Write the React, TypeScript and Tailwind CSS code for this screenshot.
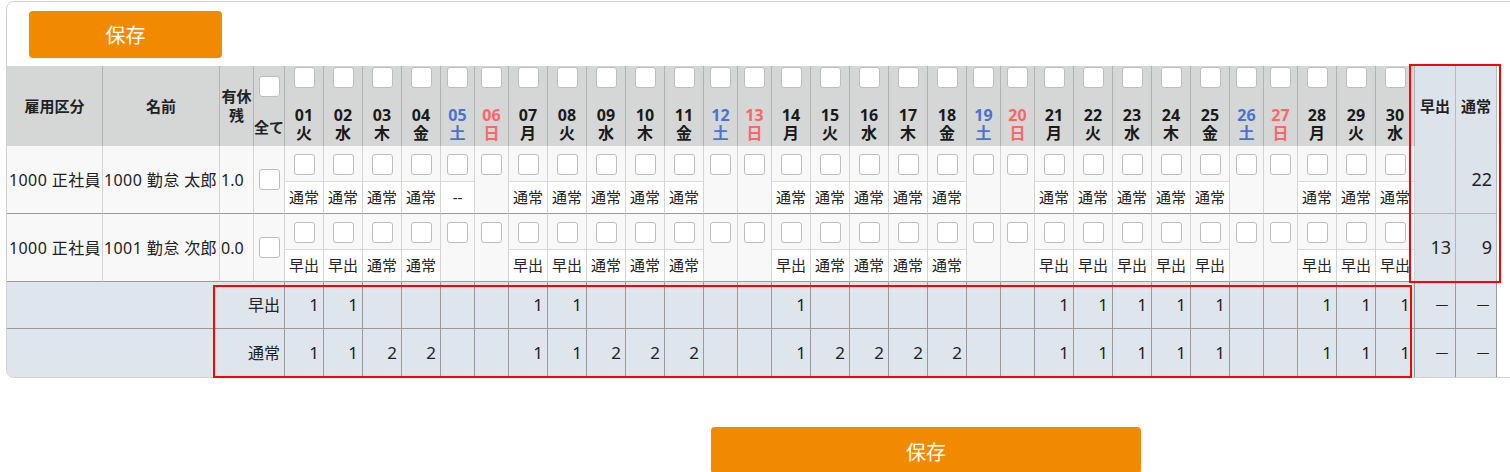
import React from 'react';

type Day = { d: string; w: string; off?: 'sat' | 'sun' };

const WEEK = ['火', '水', '木', '金', '土', '日', '月'];

const DAYS: Day[] = Array.from({ length: 30 }, (_, i) => {
  const w = WEEK[i % 7];
  return {
    d: String(i + 1).padStart(2, '0'),
    w,
    off: w === '土' ? 'sat' : w === '日' ? 'sun' : undefined,
  };
});

// days with the early shift for 次郎
const EARLY = [1, 2, 7, 8, 14, 21, 22, 23, 24, 25, 28, 29, 30];

const STAFF = [
  {
    kubun: '1000 正社員',
    name: '1000 勤怠 太郎',
    leave: '1.0',
    shifts: DAYS.map((day, i) => (day.off ? (i === 4 ? '--' : '') : '通常')),
  },
  {
    kubun: '1000 正社員',
    name: '1001 勤怠 次郎',
    leave: '0.0',
    shifts: DAYS.map((day, i) => (day.off ? '' : EARLY.includes(i + 1) ? '早出' : '通常')),
  },
];

const KINDS = ['早出', '通常'];

const countDay = (kind: string, i: number) => STAFF.filter((s) => s.shifts[i] === kind).length;
const countStaff = (kind: string, shifts: string[]) => shifts.filter((s) => s === kind).length;

function Box() {
  return <span className="block w-[21px] h-[21px] bg-white border border-[#bdbdbd] rounded-[3px]" />;
}

function dayColor(day: Day) {
  if (day.off === 'sat') return 'text-[#4a72cf]';
  if (day.off === 'sun') return 'text-[#ff6666]';
  return 'text-[#1a1a1a]';
}

export default function App() {
  return (
    <div className="relative w-full min-h-[472px] overflow-hidden bg-white pt-[1px] font-['Noto_Sans','Noto_Sans_CJK_JP',sans-serif] text-[#222]">
      <div className="ml-[6px] w-[1540px] border border-[#d0d0d0] rounded-lg overflow-hidden bg-white">
        <div className="pt-[9px] pl-[22px] pb-[8px]">
          <button className="w-[193px] h-[47px] pt-[2px] bg-[#f28a00] rounded-[4px] text-white text-[20px]">保存</button>
        </div>

        <table className="table-fixed border-separate border-spacing-0 w-[1490px]">
          <colgroup>
            <col className="w-[96px]" />
            <col className="w-[117px]" />
            <col className="w-[34px]" />
            <col className="w-[31px]" />
            {DAYS.map((day) => (
              <col key={day.d} className={day.off ? 'w-[34px]' : 'w-[39px]'} />
            ))}
            <col className="w-[41px]" />
            <col className="w-[41px]" />
          </colgroup>

          <thead>
            <tr className="bg-[#d5d7d7] font-bold text-[15px]">
              <th className="h-[80px] border-r border-[#b3b3b3]">雇用区分</th>
              <th className="border-r border-[#b3b3b3]">名前</th>
              <th className="border-r border-[#b3b3b3] px-0 leading-[19px]">有休残</th>
              <th className="border-r border-[#b3b3b3] p-0 align-top">
                <div className="flex flex-col items-center h-[80px] pt-[10px]">
                  <Box />
                  <span className="mt-[21px] leading-[18px]">全て</span>
                </div>
              </th>
              {DAYS.map((day) => (
                <th key={day.d} className="border-r border-[#b3b3b3] p-0 align-top">
                  <div className="flex flex-col items-center h-[80px] pt-[1px] pb-[4px]">
                    <Box />
                    <span className={`mt-auto leading-[18px] text-[16px] ${dayColor(day)}`}>{day.d}</span>
                    <span className={`leading-[18px] text-[16px] ${dayColor(day)}`}>{day.w}</span>
                  </div>
                </th>
              ))}
              {KINDS.map((k) => (
                <th key={k} className="bg-[#dde3ea] border-r border-[#bbbbbb] text-[15px] px-0">
                  {k}
                </th>
              ))}
            </tr>
          </thead>

          <tbody>
            {STAFF.map((s) => (
              <tr key={s.name} className="bg-[#f8f8f8] text-[16px]">
                <td className="h-[67px] border-r border-b border-r-[#d4d4d4] border-b-[#9a9a9a] pl-[2px] tracking-[0.4px] whitespace-nowrap overflow-hidden">
                  {s.kubun}
                </td>
                <td className="border-r border-b border-r-[#d4d4d4] border-b-[#9a9a9a] pl-[1px] tracking-[0.4px] whitespace-nowrap overflow-hidden">
                  {s.name}
                </td>
                <td className="border-r border-b border-r-[#d4d4d4] border-b-[#9a9a9a] pl-[1px]">{s.leave}</td>
                <td className="border-r border-b border-r-[#d4d4d4] border-b-[#9a9a9a]">
                  <div className="flex justify-center">
                    <Box />
                  </div>
                </td>
                {DAYS.map((day, i) => (
                  <td key={day.d} className="p-0 align-top border-r border-b border-r-[#d4d4d4] border-b-[#9a9a9a]">
                    <div className="flex flex-col h-[67px]">
                      <div className="h-[35px] pt-[8px] flex justify-center">
                        <Box />
                      </div>
                      {s.shifts[i] && (
                        <div className="flex-1 bg-white border-t border-[#d9d9d9] text-center text-[15px] leading-[31px] whitespace-nowrap">
                          {s.shifts[i]}
                        </div>
                      )}
                    </div>
                  </td>
                ))}
                {KINDS.map((k) => {
                  const n = countStaff(k, s.shifts);
                  return (
                    <td key={k} className="bg-[#dde3ea] border-r border-b border-[#b5b5b5] text-right pr-[4px] text-[18px]">
                      {n > 0 ? n : ''}
                    </td>
                  );
                })}
              </tr>
            ))}
          </tbody>

          <tfoot>
            {KINDS.map((k, r) => {
              const edge = r === 0 ? 'border-b border-[#9a9a9a]' : 'border-[#9a9a9a]';
              return (
                <tr key={k} className="bg-[#dfe5ec] text-[16px]">
                  <td colSpan={4} className={`border-r ${edge} text-right pr-[4px] ${r === 0 ? 'h-[47px]' : 'h-[48px]'}`}>
                    {k}
                  </td>
                  {DAYS.map((day, i) => {
                    const n = countDay(k, i);
                    return (
                      <td key={day.d} className={`border-r ${edge} text-right pr-[4px] text-[17px]`}>
                        {n > 0 ? n : ''}
                      </td>
                    );
                  })}
                  <td className={`border-r ${edge} text-right pr-[5px]`}>－</td>
                  <td className={`border-r ${edge} text-right pr-[5px]`}>－</td>
                </tr>
              );
            })}
          </tfoot>
        </table>
      </div>

      <div className="mt-[49px] ml-[711px]">
        <button className="w-[430px] h-[47px] pt-[4px] bg-[#f28a00] rounded-[4px] text-white text-[20px]">保存</button>
      </div>

      {/* highlight frames */}
      <div className="absolute left-[1409px] top-[64px] w-[92px] h-[219px] border-2 border-[#ff0000] pointer-events-none" />
      <div className="absolute left-[213px] top-[285px] w-[1199px] h-[93px] border-2 border-[#ff0000] pointer-events-none" />
    </div>
  );
}
